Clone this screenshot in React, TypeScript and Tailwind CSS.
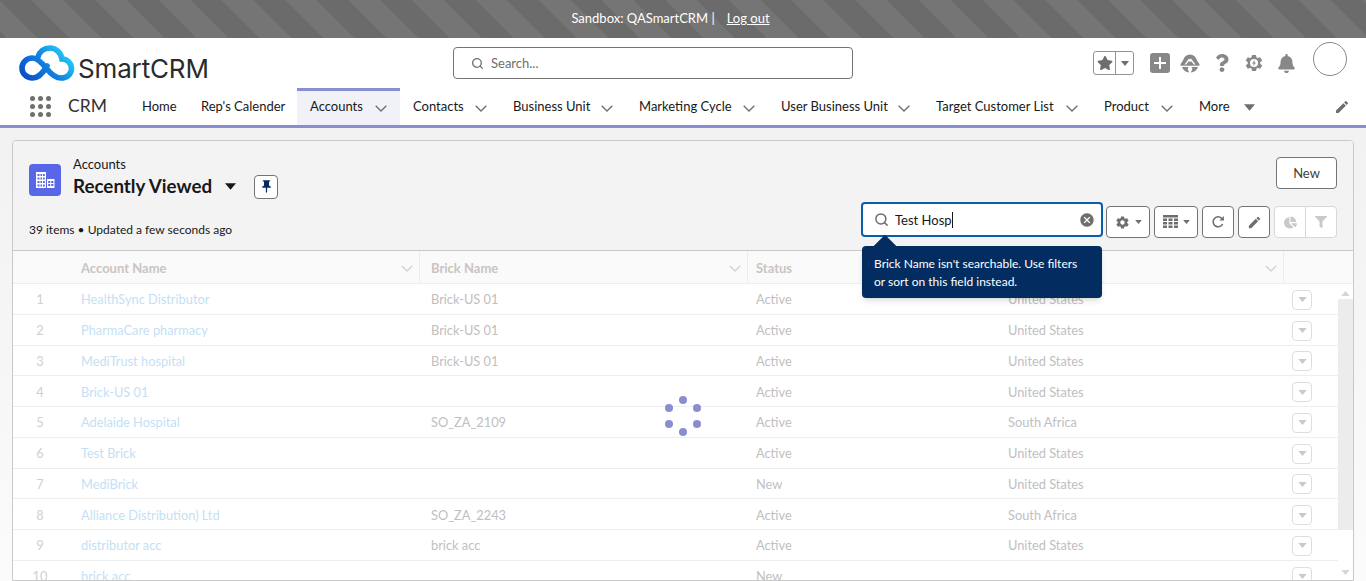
import { FaBell, FaChartPie, FaFilter, FaQuestion, FaStar } from "react-icons/fa";
import { IoMdSettings } from "react-icons/io";
import { MdCancel, MdEdit, MdPushPin } from "react-icons/md";
import { Search } from "lucide-react";

const navItems = [
  { label: "Home", width: "w-[59px]" },
  { label: "Rep's Calender", width: "w-[109px]" },
  { label: "Accounts", width: "w-[103px]", menu: true, active: true },
  { label: "Contacts", width: "w-[100px]", menu: true },
  { label: "Business Unit", width: "w-[126px]", menu: true },
  { label: "Marketing Cycle", width: "w-[142px]", menu: true },
  { label: "User Business Unit", width: "w-[155px]", menu: true },
  { label: "Target Customer List", width: "w-[168px]", menu: true },
  { label: "Product", width: "w-[95px]", menu: true },
];

const rows = [
  ["HealthSync Distributor", "Brick-US 01", "Active", "United States"],
  ["PharmaCare pharmacy", "Brick-US 01", "Active", "United States"],
  ["MediTrust hospital", "Brick-US 01", "Active", "United States"],
  ["Brick-US 01", "", "Active", "United States"],
  ["Adelaide Hospital", "SO_ZA_2109", "Active", "South Africa"],
  ["Test Brick", "", "Active", "United States"],
  ["MediBrick", "", "New", "United States"],
  ["Alliance Distribution) Ltd", "SO_ZA_2243", "Active", "South Africa"],
  ["distributor acc", "brick acc", "Active", "United States"],
  ["brick acc", "", "New", ""],
];

function Chevron({ color = "#706e6b" }: { color?: string }) {
  return (
    <svg width="12" height="7" viewBox="0 0 12 7" fill="none" stroke={color} strokeWidth="1.3">
      <path d="M0.7 0.7 L6 6 L11.3 0.7" />
    </svg>
  );
}

function Caret({ w = 10, h = 6, color = "#706e6b" }: { w?: number; h?: number; color?: string }) {
  return (
    <svg width={w} height={h} viewBox="0 0 10 6" fill={color}>
      <path d="M0 0 H10 L5 6 Z" />
    </svg>
  );
}

function Logo() {
  return (
    <svg width="57" height="37" viewBox="0 0 57 37" fill="none" className="shrink-0">
      <defs>
        <linearGradient id="logoBlue" x1="4" y1="34" x2="40" y2="2" gradientUnits="userSpaceOnUse">
          <stop offset="0" stopColor="#0a4cc4" />
          <stop offset="0.55" stopColor="#0f7fe0" />
          <stop offset="1" stopColor="#22c4f6" />
        </linearGradient>
      </defs>
      <path
        d="M28 21 C24 28 20 33 13.5 33 C7.5 33 3 28.5 3 23 C3 17.5 7.5 13 13.5 13 C19 13 24 19 28 24 C32 29 36 33 42 33 C48 33 52.5 29 52.5 23.5 C52.5 18 48 14 43 14 C42 7.5 37 3 31 3 C25 3 20.5 6.5 19 12"
        stroke="url(#logoBlue)"
        strokeWidth="5.6"
        strokeLinecap="round"
      />
    </svg>
  );
}

function AppGrid() {
  return (
    <div className="grid grid-cols-3 gap-x-[3px] gap-y-[3px] w-[21px]">
      {Array.from({ length: 9 }).map((_, i) => (
        <span key={i} className="w-[5px] h-[5px] rounded-full bg-[#706e6b]" />
      ))}
    </div>
  );
}

function TrailIcon() {
  return (
    <svg width="20" height="19" viewBox="0 0 20 19" fill="#8a8886">
      <path d="M10 0.5 C13.5 0.5 15.8 2.8 16.8 6 L19.6 10.5 C19.8 11.3 19.2 11.8 18.4 11.8 H1.6 C0.8 11.8 0.2 11.3 0.4 10.5 L3.2 6 C4.2 2.8 6.5 0.5 10 0.5 Z" />
      <path d="M2 13 H8.6 L7.6 15 L9.2 18.6 C6 18.4 3.2 16.4 2 13 Z M11.4 13 H18 C16.8 16.4 14 18.4 10.8 18.6 L12.4 15 Z" />
      <path d="M4.5 10.5 L9 4.5 L10 5.6 L11 4.5 L15.5 10.5 H13.8 L11 7 L10 8.2 L9 7 L6.2 10.5 Z" fill="#fff" />
    </svg>
  );
}

function GearBolt() {
  return (
    <span className="relative block w-[20px] h-[20px]">
      <IoMdSettings size={20} color="#8a8886" />
      <svg width="20" height="20" viewBox="0 0 20 20" className="absolute left-0 top-0">
        <circle cx="10" cy="10" r="4" fill="#fff" />
        <path d="M10.8 6.8 L8 10.6 H9.8 L9.2 13.2 L12 9.4 H10.2 Z" fill="#8a8886" />
      </svg>
    </span>
  );
}

function BuildingIcon() {
  return (
    <svg width="20" height="18" viewBox="0 0 20 18" fill="#fff">
      <path
        fillRule="evenodd"
        d="M1 1 H11 V17 H1 Z M2.5 3 V5 H4.5 V3 Z M5.5 3 V5 H7 V3 Z M8 3 V5 H9.8 V3 Z M2.5 6.5 V8.5 H4.5 V6.5 Z M5.5 6.5 V8.5 H7 V6.5 Z M8 6.5 V8.5 H9.8 V6.5 Z M2.5 10 V12 H4.5 V10 Z M5.5 10 V12 H7 V10 Z M8 10 V12 H9.8 V10 Z M2.5 13.5 V15.5 H4.5 V13.5 Z M5.5 13.5 V15.5 H7 V13.5 Z M8 13.5 V15.5 H9.8 V13.5 Z"
      />
      <path
        fillRule="evenodd"
        d="M12 8 H19.5 V17 H12 Z M13.2 10 V12 H15.2 V10 Z M16.2 10 V12 H18.4 V10 Z M13.2 13 V15 H15.2 V13 Z M16.2 13 V15 H18.4 V13 Z"
      />
    </svg>
  );
}

function TableIcon() {
  return (
    <svg width="15" height="14" viewBox="0 0 15 14" fill="#706e6b">
      <rect x="0" y="0" width="15" height="2.5" />
      <path d="M0 3.5 H4 V6 H0 Z M5.5 3.5 H9.5 V6 H5.5 Z M11 3.5 H15 V6 H11 Z M0 7 H4 V9.5 H0 Z M5.5 7 H9.5 V9.5 H5.5 Z M11 7 H15 V9.5 H11 Z M0 10.5 H4 V13 H0 Z M5.5 10.5 H9.5 V13 H5.5 Z M11 10.5 H15 V13 H11 Z" />
    </svg>
  );
}

function RefreshIcon() {
  return (
    <svg width="14" height="14" viewBox="0 0 14 14" fill="none" stroke="#706e6b" strokeWidth="1.6">
      <path d="M11.6 9 A5 5 0 1 1 10.6 3.2 L12.4 4.8" />
      <path d="M12.8 1 V5.4 H8.4" fill="#706e6b" stroke="none" />
    </svg>
  );
}

function TopBar() {
  return (
    <div className="h-[38px] shrink-0 flex items-center justify-center pr-[25px] text-white text-[13px] bg-[repeating-linear-gradient(45deg,#6b6b6b_0,#6b6b6b_4.47px,#757575_4.47px,#757575_26.87px,#6b6b6b_26.87px,#6b6b6b_44.8px)]">
      <span>Sandbox: QASmartCRM |</span>
      <a className="underline ml-[12px]">Log out</a>
    </div>
  );
}

function GlobalHeader() {
  return (
    <div className="h-[50px] shrink-0 bg-white flex items-center pl-[19px] pr-[19px]">
      <div className="w-[434px] flex items-center gap-[2px]">
        <Logo />
        <span className="font-['Inter',sans-serif] text-[26px] leading-none text-[#2b2b2b] tracking-[-0.15px] mt-[12px]">
          SmartCRM
        </span>
      </div>
      <div className="w-[400px] h-[32px] border border-[#747474] rounded-[4px] flex items-center pl-[17px] gap-[7px] text-[13px] text-[#706e6b]">
        <Search size={13} strokeWidth={2.4} />
        <span className="pt-[1px]">Search...</span>
      </div>
      <div className="ml-auto flex items-center">
        <div className="w-[41px] h-[24px] border border-[#939393] rounded-[3px] flex items-center">
          <span className="w-[22px] h-full flex items-center justify-center border-r border-[#939393]">
            <FaStar size={16} color="#706e6b" />
          </span>
          <span className="flex-1 flex justify-center">
            <Caret w={8} h={5} />
          </span>
        </div>
        <div className="w-[20px] h-[20px] ml-[16px] rounded-[3px] bg-[#8a8886] flex items-center justify-center">
          <svg width="12" height="12" viewBox="0 0 12 12" fill="#fff">
            <path d="M5 0 H7 V5 H12 V7 H7 V12 H5 V7 H0 V5 H5 Z" />
          </svg>
        </div>
        <span className="ml-[10px]">
          <TrailIcon />
        </span>
        <span className="ml-[13px]">
          <FaQuestion size={18} color="#8a8886" />
        </span>
        <span className="ml-[13px]">
          <GearBolt />
        </span>
        <span className="ml-[13px]">
          <FaBell size={19} color="#8a8886" />
        </span>
        <span className="ml-[17px] w-[34px] h-[34px] rounded-full border border-[#8a8886] -mt-[8px]" />
      </div>
    </div>
  );
}

function NavBar() {
  return (
    <div className="h-[40px] shrink-0 bg-white border-b-[3px] border-[#8b8dd1] flex items-stretch pl-[30px] pr-[16px]">
      <div className="flex items-center">
        <AppGrid />
      </div>
      <div className="w-[78px] pl-[17px] flex items-center text-[17.5px] text-[#333]">CRM</div>
      {navItems.map((item) => (
        <div
          key={item.label}
          className={
            item.active
              ? `${item.width} pl-[13px] pr-[13px] pb-[2px] flex items-center text-[#181818] bg-[#f1f2f8] border-t-[3px] border-[#8b8dd1]`
              : `${item.width} pl-[13px] pr-[13px] pb-[2px] flex items-center text-[#181818] border-t-[3px] border-transparent`
          }
        >
          <span className="whitespace-nowrap">{item.label}</span>
          {item.menu && (
            <span className="ml-auto pt-[2px]">
              <Chevron />
            </span>
          )}
        </div>
      ))}
      <div className="flex items-center pl-[13px] pt-[1px] text-[#181818]">
        <span>More</span>
        <span className="ml-[14px]">
          <Caret w={11} h={7} />
        </span>
      </div>
      <div className="ml-auto flex items-center">
        <MdEdit size={16} color="#706e6b" />
      </div>
    </div>
  );
}

function ToolButton({ children, width }: { children: React.ReactNode; width: string }) {
  return (
    <div className={`${width} h-[32px] border border-[#747474] rounded-[4px] bg-white flex items-center justify-center gap-[5px]`}>
      {children}
    </div>
  );
}

function ListHeader() {
  return (
    <div className="h-[110px] shrink-0 bg-[#f3f3f3] pl-[16px] pr-[16px] relative flex flex-col border-b border-[#c9c9c9]">
      <div className="h-[45px] flex items-start mt-[16px] justify-between">
        <div className="flex items-start">
          <div className="w-[32px] h-[32px] mt-[7px] rounded-[4px] bg-[#5867e8] flex items-center justify-center">
            <BuildingIcon />
          </div>
          <div className="ml-[12px] -mt-[1px]">
            <div className="leading-[16px] text-[#181818]">Accounts</div>
            <div className="flex items-center h-[28px]">
              <span className="text-[18.8px] font-bold text-[#181818] leading-none">Recently Viewed</span>
              <span className="ml-[13px]">
                <Caret w={11} h={7} color="#181818" />
              </span>
              <span className="ml-[18px] w-[24px] h-[24px] mt-[1px] border border-[#747474] rounded-[4px] bg-white flex items-center justify-center">
                <MdPushPin size={15} color="#032d60" />
              </span>
            </div>
          </div>
        </div>
        <div className="w-[61px] h-[32px] pt-[1px] border border-[#747474] rounded-[4px] bg-white flex items-center justify-center text-[#3e3e3c]">
          New
        </div>
      </div>
      <div className="flex items-start justify-between">
        <div className="text-[12px] text-[#181818] leading-[16px] mt-[20px]">39 items • Updated a few seconds ago</div>
        <div className="flex items-start gap-[3px]">
          <div className="w-[242px] h-[35px] border-2 border-[#0b5cab] rounded-[4px] bg-white flex items-center pl-[11px] pr-[6px]">
            <Search size={15} color="#706e6b" strokeWidth={2.4} />
            <span className="ml-[6px] text-[#181818] border-r border-[#181818] leading-[16px]">Test Hosp</span>
            <span className="ml-auto">
              <MdCancel size={16} color="#706e6b" />
            </span>
          </div>
          <div className="flex items-center gap-[4px] mt-[4px]">
            <ToolButton width="w-[44px]">
              <IoMdSettings size={15} color="#706e6b" />
              <Caret w={7} h={4} />
            </ToolButton>
            <ToolButton width="w-[44px]">
              <TableIcon />
              <Caret w={7} h={4} />
            </ToolButton>
            <ToolButton width="w-[32px]">
              <RefreshIcon />
            </ToolButton>
            <ToolButton width="w-[32px]">
              <MdEdit size={15} color="#706e6b" />
            </ToolButton>
            <div className="w-[63px] h-[32px] border border-[#d8d8d8] rounded-[4px] bg-white flex items-center">
              <span className="w-[31px] h-full flex items-center justify-center border-r border-[#d8d8d8]">
                <FaChartPie size={13} color="#c9c9c9" />
              </span>
              <span className="flex-1 flex items-center justify-center">
                <FaFilter size={12} color="#c9c9c9" />
              </span>
            </div>
          </div>
        </div>
      </div>
      {/* search error popover */}
      <div className="absolute left-[849px] top-[105px] w-[240px] h-[52px] z-20 bg-[#032d60] rounded-[4px] text-white text-[12px] leading-[18px] pl-[12px] pr-[12px] pt-[9px] shadow-md">
        <span className="absolute left-[15px] -top-[8px] w-[16px] h-[16px] rotate-45 bg-[#032d60]" />
        <span className="relative">Brick Name isn't searchable. Use filters or sort on this field instead.</span>
      </div>
    </div>
  );
}

function HeaderCell({ label, pad = "pl-[11px]" }: { label?: string; pad?: string }) {
  return (
    <div className={`${pad} flex items-center pr-[6px] pt-[3px] border-r border-[#ececec]`}>
      <span className="font-bold text-[#c9c5c1]">{label}</span>
      <span className="ml-auto">
        <Chevron color="#d4d2d0" />
      </span>
    </div>
  );
}

function Table() {
  return (
    <div className="flex-1 min-h-0 relative bg-white overflow-hidden">
      <div className="h-[33px] bg-[#fafafa] border-b border-[#eeeeee] grid grid-cols-[57px_350px_328px_250px_286px_69px]">
        <div />
        <HeaderCell label="Account Name" />
        <HeaderCell label="Brick Name" />
        <HeaderCell label="Status" pad="pl-[8px]" />
        <HeaderCell />
        <div />
      </div>
      <div className="flex">
        <div className="w-[1325px]">
          {rows.map((row, i) => (
            <div
              key={i}
              className="h-[30.75px] pt-[2px] border-b border-[#eeeeee] grid grid-cols-[57px_350px_327px_251px_285px_55px] items-center text-[12.8px] text-[#c0c0c0]"
            >
              <div className="text-center text-[#d0d0d0] pr-[3px]">{i + 1}</div>
              <div className="pl-[11px] text-[#c4dff5]">{row[0]}</div>
              <div className="pl-[11px]">{row[1]}</div>
              <div className="pl-[9px]">{row[2]}</div>
              <div className="pl-[10px]">{row[3]}</div>
              <div className="pl-[9px]">
                <span className="w-[20px] h-[20px] border border-[#dedede] rounded-[4px] flex items-center justify-center">
                  <Caret w={9} h={5} color="#c9c9c9" />
                </span>
              </div>
            </div>
          ))}
        </div>
        <div className="w-[15px] h-[297px] flex flex-col items-center pt-[7px] pb-[6px]">
          <span className="rotate-180">
            <Caret w={9} h={5} color="#d6d6d6" />
          </span>
          <div className="w-[15px] h-[231px] bg-[#ececec] mt-[3px]" />
          <div className="mt-auto">
            <Caret w={9} h={5} color="#d6d6d6" />
          </div>
        </div>
      </div>
      {/* loading spinner */}
      <div className="absolute left-[652px] top-[145px] w-[36px] h-[40px]">
        <span className="absolute left-[14px] top-0 w-[8px] h-[8px] rounded-full bg-[#8b8dd1]" />
        <span className="absolute left-[28px] top-[8px] w-[8px] h-[8px] rounded-full bg-[#8b8dd1]" />
        <span className="absolute left-[28px] top-[24px] w-[8px] h-[8px] rounded-full bg-[#8b8dd1]" />
        <span className="absolute left-[14px] top-[32px] w-[8px] h-[8px] rounded-full bg-[#8b8dd1]" />
        <span className="absolute left-0 top-[24px] w-[8px] h-[8px] rounded-full bg-[#8b8dd1]" />
        <span className="absolute left-0 top-[8px] w-[8px] h-[8px] rounded-full bg-[#8b8dd1]" />
      </div>
    </div>
  );
}

export default function App() {
  return (
    <div className="h-[581px] w-[1366px] overflow-hidden flex flex-col font-['Lato',sans-serif] text-[13px] bg-gradient-to-b from-[#efefef] to-[#fbfbfb]">
      <TopBar />
      <GlobalHeader />
      <NavBar />
      <div className="flex-1 min-h-0 pt-[12px] pl-[12px] pr-[12px]">
        <div className="h-full border border-[#c9c9c9] rounded-t-[4px] overflow-hidden flex flex-col">
          <ListHeader />
          <Table />
        </div>
      </div>
    </div>
  );
}
